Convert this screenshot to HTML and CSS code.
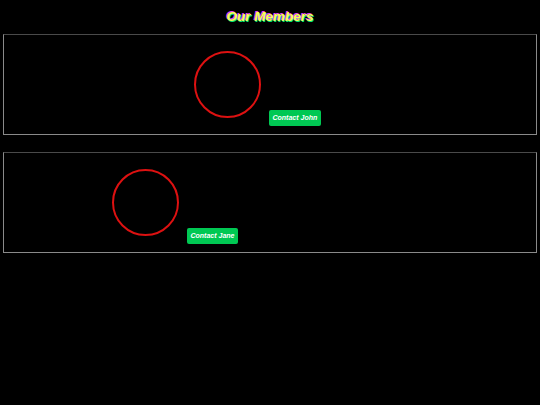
FILE: index.html
```html
<!DOCTYPE html>
<html>
<head>
<meta charset="utf-8">
<link rel="stylesheet" href="styles.css">
</head>
<body>
<h1 class="title">Our Members</h1>
<div class="members">
  <div class="card">
    <div class="avatar avatar-john"></div>
    <button class="contact">Contact John</button>
  </div>
  <div class="card">
    <div class="avatar avatar-jane"></div>
    <button class="contact">Contact Jane</button>
  </div>
</div>
</body>
</html>
```
FILE: styles.css
```css
html, body {
  background: #000;
}
body {
  margin: 0;
  padding: 0 3px;
  font-family: "Liberation Sans", Arial, sans-serif;
}
.title {
  margin: 0;
  padding-top: 9px;
  height: 25px;
  text-align: center;
  font-size: 13.5px;
  line-height: 16px;
  font-weight: bold;
  font-style: italic;
  color: #f4ff5a;
  text-shadow: -1px -1px 0 #e040fb, 1px 1px 0 #00e676;
}
.members {
  display: flex;
  flex-direction: column;
  gap: 17px;
}
.card {
  box-sizing: border-box;
  height: 101px;
  border: 1px solid #8a8a8a;
  border-top-color: #4a4a4a;
  padding: 16px;
  display: flex;
  align-items: flex-end;
  gap: 8px;
}
.avatar {
  box-sizing: border-box;
  width: 67px;
  height: 67px;
  border: 2.5px solid #dd1111;
  border-radius: 50%;
  flex: none;
  margin-top: -1px;
}
.avatar-john { margin-left: 174px; }
.avatar-jane { margin-left: 92px; }
.contact {
  height: 16px;
  margin-bottom: -8px;
  padding: 0 3.5px;
  border: none;
  border-radius: 2px;
  background: #00c853;
  color: #fff;
  font-family: "Liberation Sans", Arial, sans-serif;
  font-size: 7px;
  font-weight: bold;
  font-style: italic;
  line-height: 16px;
}
```
